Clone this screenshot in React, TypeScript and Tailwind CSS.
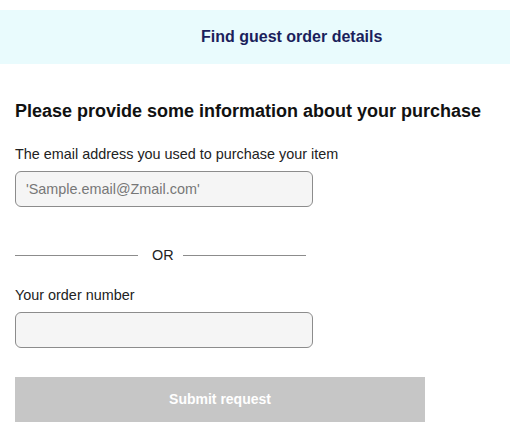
export default function App() {
  return (
    <div className="w-[510px] h-[447px] bg-white font-['Liberation_Sans',Arial,sans-serif] text-[#1a1a1a]">
      <div className="h-[10px]" />
      <div className="h-[54px] bg-[#e9fbfd] flex items-center pl-[201px]">
        <h1 className="text-[16px] font-bold text-[#1b1f5c]">Find guest order details</h1>
      </div>
      <div className="px-[15px]">
        <h2 className="mt-[36px] text-[18px] leading-[22px] font-bold text-[#111]">
          Please provide some information about your purchase
        </h2>
        <label className="block mt-[23px] text-[14.4px] leading-[18px] text-[#222]">
          The email address you used to purchase your item
        </label>
        <input
          className="mt-[8px] block w-[298px] h-[36px] rounded-[6px] border border-[#8c8c8c] bg-[#f5f5f5] px-[10px] text-[14.4px] placeholder:text-[#777] outline-none"
          placeholder="'Sample.email@Zmail.com'"
        />
        <div className="mt-[38px] flex items-center">
          <div className="w-[123px] h-px bg-[#8c8c8c]" />
          <span className="ml-[14px] mr-[9px] text-[14.4px] text-[#222]">OR</span>
          <div className="w-[123px] h-px bg-[#8c8c8c]" />
        </div>
        <label className="block mt-[19px] text-[14.4px] leading-[18px] text-[#222]">
          Your order number
        </label>
        <input className="mt-[8px] block w-[298px] h-[36px] rounded-[6px] border border-[#8c8c8c] bg-[#f5f5f5] px-[10px] text-[14.4px] outline-none" />
        <button className="mt-[29px] block w-[410px] h-[45px] bg-[#c6c6c6] text-white text-[14px] font-bold">
          Submit request
        </button>
      </div>
    </div>
  );
}
